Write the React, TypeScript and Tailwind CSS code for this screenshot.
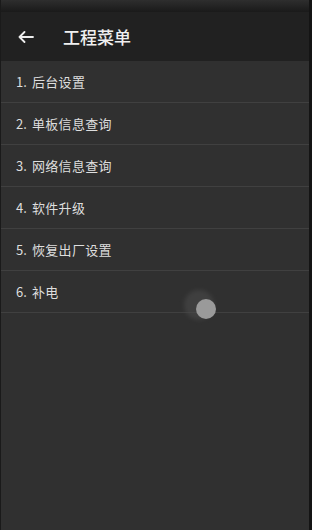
import React from "react";

const items = [
  ["1.", "后台设置"],
  ["2.", "单板信息查询"],
  ["3.", "网络信息查询"],
  ["4.", "软件升级"],
  ["5.", "恢复出厂设置"],
  ["6.", "补电"],
];

export default function App() {
  return (
    <div
      className="relative w-[312px] h-[530px] overflow-hidden bg-[#303030] flex flex-col border-l border-l-[#1a1a1a] border-r-[3px] border-r-[#141414]"
      style={{ fontFamily: '"Noto Sans CJK SC", "Noto Sans", sans-serif' }}
    >
      <div className="h-[12px] bg-gradient-to-b from-[#2e2e2e] to-[#1a1a1a] shrink-0" />
      <div className="h-[49px] bg-[#212121] flex items-center shrink-0">
        <div className="w-[62px] pl-[17px] flex items-center">
          <svg width="16" height="12" viewBox="0 0 16 12" fill="none" stroke="#eeeeee" strokeWidth="1.8" strokeLinecap="round" strokeLinejoin="round">
            <path d="M15 6H1.5M6.5 1L1.5 6l5 5" />
          </svg>
        </div>
        <span className="text-[17px] font-medium text-[#f0f0f0] leading-none">工程菜单</span>
      </div>
      <div className="flex flex-col">
        {items.map(([n, t]) => (
          <div key={t} className="h-[42px] flex items-center pl-[15px] border-b border-b-[#404040] text-[13px] text-[#dedede]">
            <span className="w-[16px]">{n}</span>
            <span className="tracking-[0.3px]">{t}</span>
          </div>
        ))}
      </div>
      <div className="absolute left-[183px] top-[290px] w-[30px] h-[30px] rounded-full bg-[#4a4a4a] opacity-60 blur-[2px]" />
      <div className="absolute left-[195px] top-[299px] w-[20px] h-[20px] rounded-full bg-[#9a9a9a] blur-[0.5px]" />
    </div>
  );
}
